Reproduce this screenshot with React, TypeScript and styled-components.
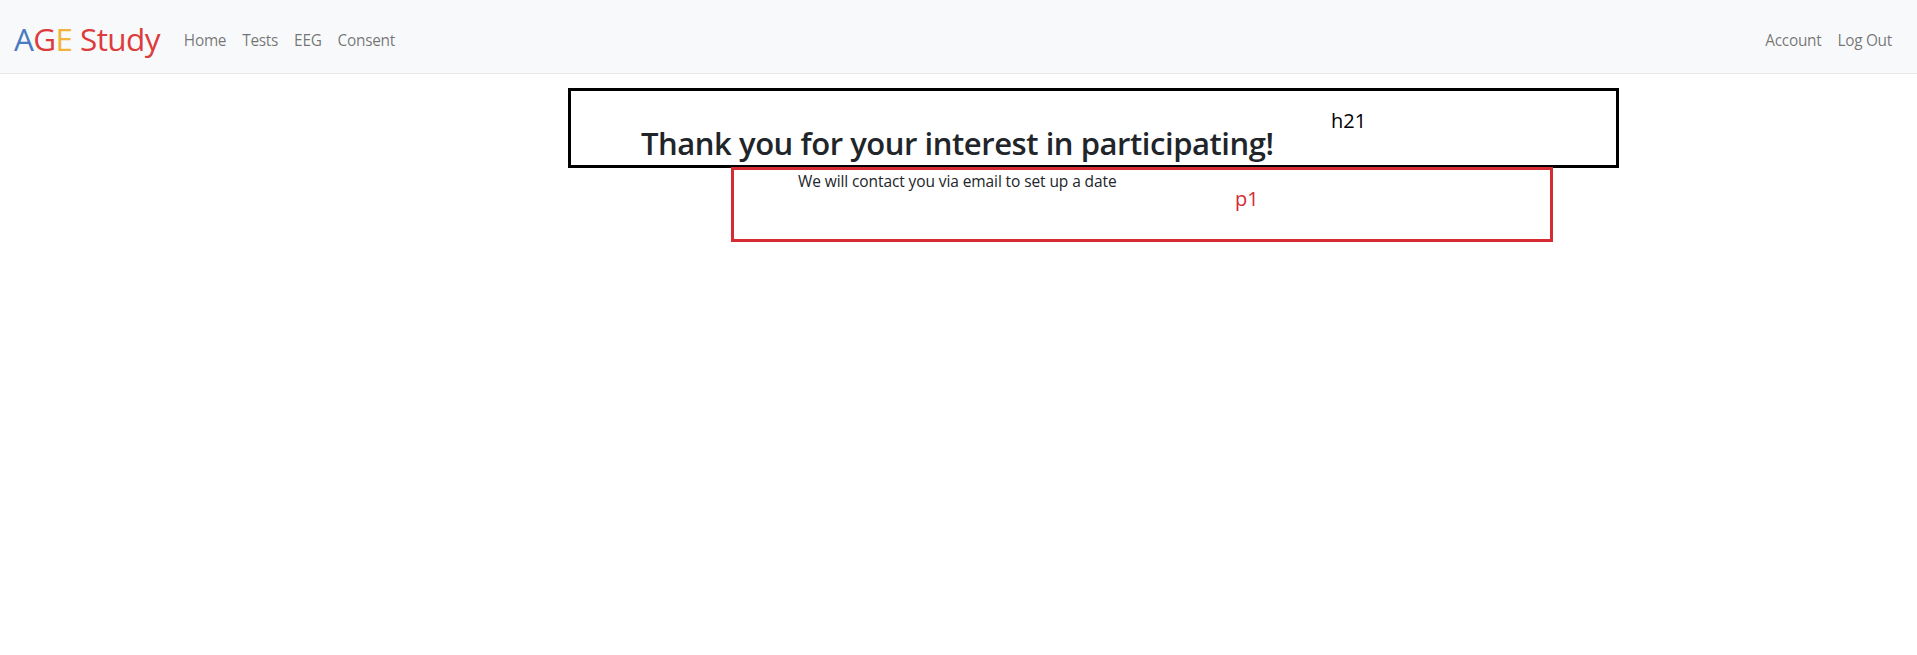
import React from "react";
import styled, { createGlobalStyle } from "styled-components";

const GlobalStyle = createGlobalStyle`
  html, body { margin: 0; padding: 0; background: #ffffff; }
  body {
    font-family: "Open Sans", "Noto Sans", "Liberation Sans", sans-serif;
    color: #212529;
  }
  * { box-sizing: border-box; }
`;

const Navbar = styled.nav`
  height: 74px;
  background: #f8f9fa;
  border-bottom: 1px solid #e6e7e8;
  display: flex;
  align-items: center;
  padding: 4px 17px 0 12px;
`;

const Brand = styled.a`
  font-size: 31.5px;
  line-height: 48px;
  letter-spacing: -0.62px;
  margin-right: 16px;
  margin-left: 2px;
  text-decoration: none;
  white-space: nowrap;
`;

const BrandLetter = styled.span<{ $color: string }>`
  color: ${(p) => p.$color};
`;

const NavList = styled.ul<{ $end?: boolean }>`
  display: flex;
  list-style: none;
  margin: 4px 0 0 ${(p) => (p.$end ? "auto" : "0")};
  padding: 0;
`;

const NavLink = styled.a`
  display: block;
  padding: 0 8px;
  font-size: 15.4px;
  line-height: 24px;
  letter-spacing: -0.28px;
  color: rgba(0, 0, 0, 0.55);
  text-decoration: none;
`;

const Main = styled.main`
  display: flex;
  flex-direction: column;
  padding-top: 14px;
`;

const HeadingBox = styled.section`
  position: relative;
  margin-left: 568px;
  width: 1051px;
  height: 80px;
  border: 3px solid #000;
  padding: 33px 0 0 70px;
`;

const Heading = styled.h2`
  margin: 0;
  font-size: 31px;
  font-weight: 600;
  line-height: 38px;
  letter-spacing: -0.45px;
  color: #212529;
`;

const ParagraphBox = styled.section`
  position: relative;
  margin-left: 731px;
  margin-top: -1px;
  width: 822px;
  height: 75px;
  border: 3px solid #d62b32;
  padding: 1px 0 0 64px;
`;

const Paragraph = styled.p`
  margin: 0;
  font-size: 15.5px;
  line-height: 20px;
  letter-spacing: -0.1px;
  color: #212529;
`;

const Label = styled.span<{ $color: string; $left: number; $top: number }>`
  position: absolute;
  left: ${(p) => p.$left}px;
  top: ${(p) => p.$top}px;
  font-size: 20px;
  line-height: 24px;
  color: ${(p) => p.$color};
`;

export default function App() {
  return (
    <>
      <GlobalStyle />
      <Navbar>
        <Brand href="#">
          <BrandLetter $color="#4a7ac0">A</BrandLetter>
          <BrandLetter $color="#dc3c3c">G</BrandLetter>
          <BrandLetter $color="#f0b43c">E</BrandLetter>
          <BrandLetter $color="#dc3c3c"> Study</BrandLetter>
        </Brand>
        <NavList>
          <li><NavLink href="#">Home</NavLink></li>
          <li><NavLink href="#">Tests</NavLink></li>
          <li><NavLink href="#">EEG</NavLink></li>
          <li><NavLink href="#">Consent</NavLink></li>
        </NavList>
        <NavList $end>
          <li><NavLink href="#">Account</NavLink></li>
          <li><NavLink href="#">Log Out</NavLink></li>
        </NavList>
      </Navbar>
      <Main>
        <HeadingBox>
          <Heading>Thank you for your interest in participating!</Heading>
          <Label $color="#000000" $left={760} $top={18}>h21</Label>
        </HeadingBox>
        <ParagraphBox>
          <Paragraph>We will contact you via email to set up a date</Paragraph>
          <Label $color="#d62b32" $left={501} $top={17}>p1</Label>
        </ParagraphBox>
      </Main>
    </>
  );
}
